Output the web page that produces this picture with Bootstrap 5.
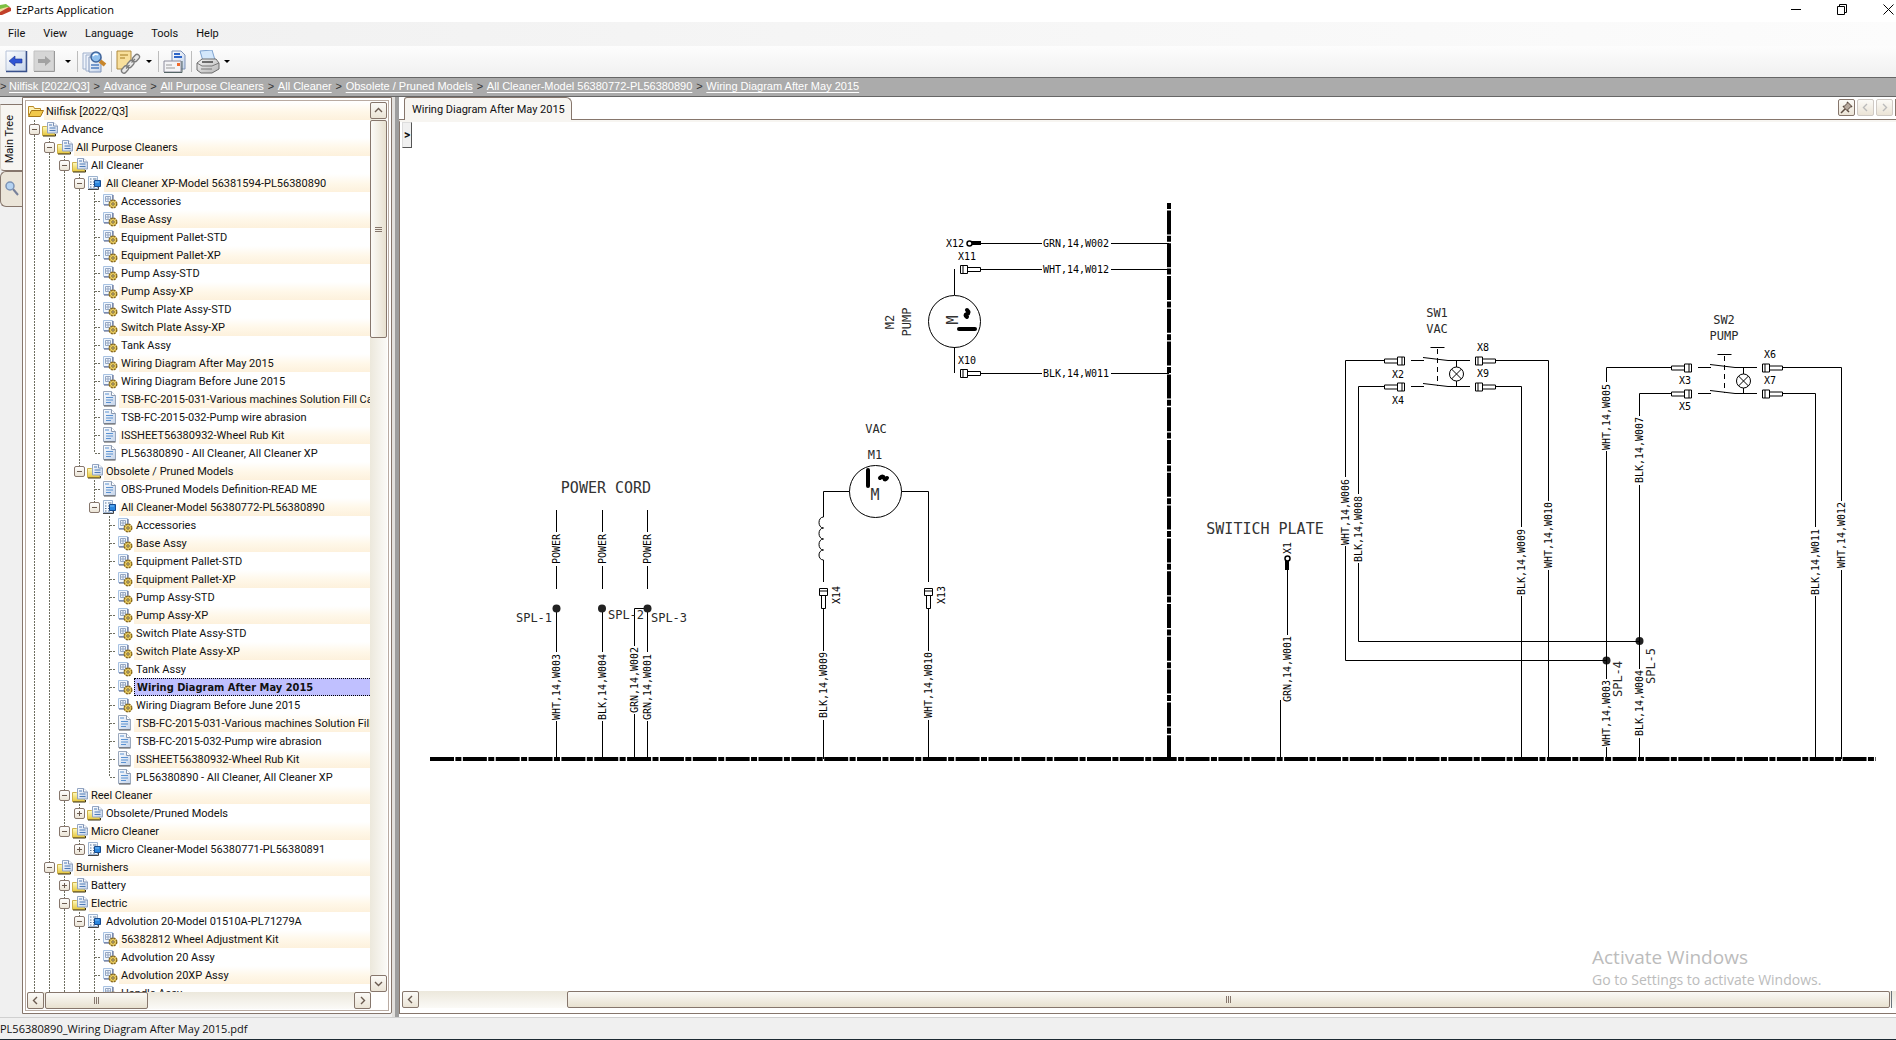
<!DOCTYPE html>
<html lang="en">
<head>
<meta charset="utf-8">
<meta name="viewport" content="width=device-width, initial-scale=1">
<title>EzParts Application</title>
<link href="https://cdn.jsdelivr.net/npm/bootstrap@5.3.0/dist/css/bootstrap.min.css" rel="stylesheet">
<style>
:root{--edge:#86766c;--soft:#b9aba2;--cream:#f7f5f1}
body{font:11px/18px Roboto,"Liberation Sans",sans-serif;color:#111;background:#f0f0f0}
button{font:inherit;padding:0;color:inherit}
svg{display:block;flex:none}
.titlebar{height:22px;background:#fff;font:11px/20px "Open Sans",sans-serif;color:#000}
.titlebar .winbtns{gap:35px;padding-right:2px}
.titlebar .plainbtn{width:11px;height:18px}
.plainbtn{border:0;background:none;display:flex;align-items:center;justify-content:center}
.menus{height:24px;background:linear-gradient(90deg,#f0f0f0,#fcfcfc);gap:18px;padding-left:8px}
.menus button{border:0;background:none;line-height:24px}
.tools{height:31px;background:linear-gradient(#fdfdfd,#f0f0f0);padding-left:5px}
.tools .sep{width:1px;height:21px;background:#bdbdbd;margin:0 4px}
.tools .dropper{margin:0 2px 0 9px}
.tools .dropper.tight{margin-left:5px}
.crumbs{height:20px;background:#ababab;border-top:1px solid #666;border-bottom:1px solid #666;font:11px/17px "Liberation Sans",sans-serif}
.crumbs a{color:#fff;text-decoration:underline;text-underline-offset:2px}
.crumbs span{width:14px;text-align:center;color:#333}
.crumbs span:first-child{width:9px;text-align:left}
.sidetabs{width:22px;background:#f0f0f0;padding-top:7px}
.sidetab{border:1px solid var(--edge);border-right:0;border-radius:6px 0 0 6px;background:#ebe5d9;width:22px;height:36px}
.sidetab.on{height:67px;background:var(--cream);border-left-color:#d8d2ca;border-radius:0 0 0 4px;padding:4px 4px 0 0}
.sidetab.on span{writing-mode:vertical-rl;transform:rotate(180deg);line-height:18px}
.treebox{width:370px;border:1px solid var(--edge);padding:2px;background:#fff;margin-bottom:3px;border-radius:0 0 2px 0}
.treein{border:1px solid var(--soft);padding:1px}
.treerow{height:18px;white-space:nowrap}
.twig{width:15px;height:18px;flex:none;position:relative}
.twig.v::before{content:"";position:absolute;left:7px;top:0;bottom:0;width:1px;background:repeating-linear-gradient(#6e6e60 0 2px,transparent 2px 3px)}
.twig.end::before{bottom:9px}
.twig.h::after{content:"";position:absolute;left:8px;right:1px;top:9px;height:1px;background:repeating-linear-gradient(90deg,#6e6e60 0 2px,transparent 2px 3px)}
.knob{position:absolute;left:2px;top:4px;width:11px;height:11px;border:1px solid var(--edge);border-radius:2px;background:linear-gradient(#fff,#ebe4d6);z-index:1}
.knob::before{content:"";position:absolute;left:2px;right:2px;top:4px;height:1px;background:#6b5b50}
.knob.plus::after{content:"";position:absolute;top:2px;bottom:2px;left:4px;width:1px;background:#6b5b50}
.treerow svg{width:17px;height:18px}
.nodetext{flex:1 0 0;min-width:0;padding:0 0 0 2px;border:0;background:none;text-align:left;white-space:nowrap;overflow:hidden;line-height:17px}
.treerow:nth-child(odd) .nodetext{background:linear-gradient(#fff,#fff8ea 50%,#fdf1dc)}
.treerow .nodetext.picked{background:#c0c0ff;border:1px dotted #000;border-right:0;font:bold 11px/15px "DejaVu Sans Condensed","DejaVu Sans",sans-serif}
.sbtn{width:17px;height:17px;border:1px solid var(--edge);border-radius:2px;background:linear-gradient(#fbfaf7,#ebe4d6);color:#6b5b50;display:flex;align-items:center;justify-content:center;flex:none}
.sbtn.off{border-color:#cfcac5;color:#bbb}
.trackv{width:17px;background:linear-gradient(90deg,#ece8dc,#fbfaf7);flex:none}
.trackh{height:17px;background:linear-gradient(#ece8dc,#fbfaf7)}
.thumb{border:1px solid var(--edge);border-radius:2px;display:flex;align-items:center;justify-content:center}
.trackv .thumb{height:218px;margin:1px 0;background:linear-gradient(90deg,#fbfaf7,#e8e1d0)}
.trackh .thumb{height:17px;background:linear-gradient(#fbfaf7,#e8e1d0)}
.trackh .short{width:103px;margin-left:1px}
.gripv{width:7px;height:5px;background:repeating-linear-gradient(#86766c 0 1px,transparent 1px 2px)}
.griph{width:5px;height:7px;background:repeating-linear-gradient(90deg,#86766c 0 1px,transparent 1px 2px)}
.splitter{width:7px;border-left:3px solid #e2e0dd;background:#9d9d9d}
.viewer{background:#fff;min-width:0}
.tabstrip{height:23px;border-bottom:1px solid var(--edge);padding-left:5px}
.doctab{height:23px;border:1px solid var(--edge);border-bottom:0;border-radius:3px 6px 0 0;background:var(--cream);padding:0 6px 0 7px;line-height:21px;margin-bottom:-1px}
.tabbtns{gap:2px;margin-top:2px}
.nexttab{width:1px;height:17px;background:var(--edge)}
.page{border-left:1px solid var(--edge);border-bottom:1px solid var(--edge);border-top:2px solid var(--cream);min-height:0;padding:0 0 5px 2px;margin-bottom:3px}
.canvas{position:relative;min-height:0}
.flyout{position:absolute;left:0;top:0;width:10px;height:26px;border:1px solid #ddd;border-right-color:#555;border-bottom-color:#555;background:#f0f0f0;font-size:12px;font-weight:bold}
.mark-os{position:absolute;right:68px;bottom:0;color:#bcbcbc;font-family:"Open Sans",sans-serif;width:236px;white-space:nowrap}
.mark-os p{margin:0;font-size:19px;line-height:24px}
.mark-os p+p{font-size:14px;line-height:22px}
.longthumb{margin-left:148px;margin-right:1px}
.statusline{height:23px;border-top:1px solid #d0d0d0;border-bottom:1px solid #1d2a33;font:11px/22px "Open Sans",sans-serif}
.wires{fill:none;stroke:#000;stroke-width:1}
.wires text,.cad{fill:#000;stroke:none;font:10px "DejaVu Sans Mono",monospace;text-anchor:middle}
.wires .mid{font-size:12px;fill:#2a2a2a}
.wires .big{font-size:15px;fill:#333}
</style>
<script src="https://cdn.jsdelivr.net/npm/bootstrap@5.3.0/dist/js/bootstrap.bundle.min.js"></script>
</head>
<body class="vh-100 overflow-hidden d-flex flex-column">

<svg width="0" height="0" class="position-absolute" aria-hidden="true">
<defs>
<linearGradient id="gy" x1="0" y1="0" x2="0" y2="1"><stop offset="0" stop-color="#fffcc0"/><stop offset="1" stop-color="#e6c63c"/></linearGradient>
<linearGradient id="gb" x1="0" y1="0" x2="1" y2="1"><stop offset="0" stop-color="#fff"/><stop offset="1" stop-color="#c3d3ea"/></linearGradient>
<linearGradient id="gg" x1="0" y1="0" x2="1" y2="1"><stop offset="0" stop-color="#f4f4f4"/><stop offset="1" stop-color="#b5b5b5"/></linearGradient>
<symbol id="i-root" viewBox="0 0 17 18"><path d="M1.500 13.500v-9h5l1 2h6v2" fill="#fff3b8" stroke="#b98a26"/><path d="M1.500 14.500l3-6h12l-3 6z" fill="#f2c84b" stroke="#a87718"/></symbol>
<symbol id="i-folder" viewBox="0 0 17 18"><path d="M.5 6.500h4l1 1h7v8H.5z" fill="url(#gy)" stroke="#cdb04a"/><path d="M1 16h12.500v-2" fill="none" stroke="#3f340e"/><path d="M5.500 2.500h6l4 3.500v7h-10z" fill="url(#gb)" stroke="#93a5c2"/><path d="M11.500 2.500V6h4" fill="#fff" stroke="#7f93b5"/><path d="M7 5h3M7.500 8h6M7.500 10.500h6" stroke="#4f7cb8"/></symbol>
<symbol id="i-model" viewBox="0 0 17 18"><path d="M1.500 2.500h9v12h-9z" fill="#f6faff" stroke="#9db3cf"/><path d="M1 15.500h10.500V13" fill="none" stroke="#444"/><path d="M3 5h1.500M3 8h1.500M3 10.500h1.500M3 13h1.500M6 5h3.500M6 8h1M6 10.500h1M6 13h2" stroke="#5b7494"/><path d="M7.500 6.500h6v6h-6z" fill="#2a86de" stroke="#154a8e"/><path d="M8 8h4" stroke="#7fc0f8"/></symbol>
<symbol id="i-part" viewBox="0 0 17 18"><path d="M1.500 2.500h9v10h-9z" fill="#f1f7fe" stroke="#a8c2e2"/><path d="M11 3v8M2 13h5" stroke="#4a5680"/><path d="M3.500 4.500h5v5h-5zM6 4.500v5M3.500 7h5" fill="none" stroke="#95a6c2"/><circle cx="11" cy="12" r="3.500" fill="#d9b234" stroke="#8a6a18" stroke-width="2" stroke-dasharray="2 .75"/><circle cx="11" cy="12" r="3" fill="#ebcf66"/><circle cx="11" cy="12" r="1.200" fill="#fff" stroke="#6c5410"/></symbol>
<symbol id="i-doc" viewBox="0 0 17 18"><path d="M1.500 1.500h8l4 4v10h-12z" fill="url(#gb)" stroke="#9aa8bd"/><path d="M2 16h11.500" stroke="#555"/><path d="M9.500 1.500v4h4" fill="#fff" stroke="#8a99b0"/><path d="M3 4h4M4 7.500h7M4 10h7M4 12.500h5" stroke="#5a92d2"/></symbol>
<symbol id="c-left" viewBox="0 0 9 9"><path d="M6 1L2.500 4.500L6 8" fill="none" stroke="currentColor" stroke-width="1.400"/></symbol>
<symbol id="c-right" viewBox="0 0 9 9"><path d="M3 1l3.500 3.500L3 8" fill="none" stroke="currentColor" stroke-width="1.400"/></symbol>
<symbol id="c-up" viewBox="0 0 9 9"><path d="M1 6l3.500-3.500L8 6" fill="none" stroke="currentColor" stroke-width="1.400"/></symbol>
<symbol id="c-down" viewBox="0 0 9 9"><path d="M1 3l3.500 3.500L8 3" fill="none" stroke="currentColor" stroke-width="1.400"/></symbol>
<symbol id="c-drop" viewBox="0 0 6 4"><path d="M0 0h6L3 3z" fill="#000"/></symbol>
</defs>
</svg>

<header>
  <div class="titlebar d-flex align-items-start">
    <svg width="12" height="18" viewBox="0 0 12 18"><path d="M0 5l6-1 4 3-10 3z" fill="#7dc043"/><path d="M0 9l7-2 3 1-8 4H0z" fill="#f3d9a0"/><path d="M0 12l9-5 2 1v3l-9 4H0z" fill="#c2402a"/></svg>
    <span class="ms-1 flex-grow-1">EzParts Application</span>
    <div class="winbtns d-flex">
      <button class="plainbtn" aria-label="Minimize"><svg width="11" height="11"><path d="M0 5.500h10" stroke="#000"/></svg></button>
      <button class="plainbtn" aria-label="Restore"><svg width="11" height="11"><path d="M.5 2.500h7v8h-7zM2.500 2.500v-2h7v8h-2" fill="none" stroke="#000"/></svg></button>
      <button class="plainbtn" aria-label="Close"><svg width="11" height="11"><path d="M.5.500l10 10M10.500.500l-10 10" stroke="#000"/></svg></button>
    </div>
  </div>
  <nav class="menus d-flex" aria-label="Menu"><button>File</button><button>View</button><button>Language</button><button>Tools</button><button>Help</button></nav>
  <div class="tools d-flex align-items-center">
    <button class="plainbtn" aria-label="Back"><svg width="23" height="23" viewBox="0 0 23 23"><path d="M1 1h20v20H1z" fill="url(#gb)" stroke="#b6c2d8"/><path d="M21.500 1v20.500H1" fill="none" stroke="#39518c" stroke-width="1.500"/><path d="M4 11l6-5v3h7v4h-7v3z" fill="#2f55d4" stroke="#1c338e" stroke-width=".6"/></svg></button>
    <button class="plainbtn ms-1" aria-label="Forward"><svg width="24" height="23" viewBox="0 0 24 23"><path d="M2 1h20v20H2z" fill="#d6d6d6" stroke="#c2c2c2"/><path d="M22.500 1v20.500H2" fill="none" stroke="#999"/><path d="M19 11l-6-5v3H6v4h7v3z" fill="#a2a2a2"/></svg></button>
    <button class="plainbtn dropper" aria-label="History"><svg width="6" height="4"><use href="#c-drop"/></svg></button>
    <i class="sep"></i>
    <button class="plainbtn" aria-label="Search"><svg width="25" height="24" viewBox="0 0 25 24"><path d="M1 3h11v16H1z" fill="#eef3fb" stroke="#9fb0cc"/><path d="M4 5h11v16H4z" fill="#eef3fb" stroke="#9fb0cc"/><path d="M7 7h12v15H7z" fill="url(#gb)" stroke="#7f93b8"/><path d="M9 15h8M9 18h8" stroke="#4f7fc0" stroke-width="1.500"/><path d="M18 11l5 4" stroke="#c8862b" stroke-width="4"/><circle cx="14" cy="7" r="5" fill="#8fc0ee" stroke="#41669c" stroke-width="1.500"/><path d="M11 6q2-3 5-1" fill="none" stroke="#fff" stroke-width="1.500"/></svg></button>
    <i class="sep"></i>
    <button class="plainbtn" aria-label="Links"><svg width="25" height="24" viewBox="0 0 25 24"><path d="M1 1h14v13l-5 5H1z" fill="#f8df9c" stroke="#b08a3c"/><path d="M4 5h8M4 8h5" stroke="#a47a20"/><g fill="none" stroke="#7c7c7c" stroke-width="1.300"><rect x="-2.500" y="-4" width="5" height="8" rx="2.500" fill="#e8e8e8" transform="translate(9 19.500) rotate(42)"/><rect x="-2.500" y="-4" width="5" height="8" rx="2.500" fill="#e8e8e8" transform="translate(14.500 14) rotate(42)"/><rect x="-2.500" y="-4" width="5" height="8" rx="2.500" fill="#e8e8e8" transform="translate(20 8) rotate(42)"/><path d="M10 18.500l3.500-3.500M15.500 12.500l3.500-3.500"/></g></svg></button>
    <button class="plainbtn dropper tight" aria-label="More links"><svg width="6" height="4"><use href="#c-drop"/></svg></button>
    <i class="sep"></i>
    <button class="plainbtn" aria-label="Send"><svg width="24" height="24" viewBox="0 0 24 24"><path d="M9 1h9l4 4v14H9z" fill="url(#gb)" stroke="#7f93b8"/><path d="M11 4h6M11 7h8" stroke="#2f66c8" stroke-width="2"/><path d="M1 11h17v11H1z" fill="#f4f4f6" stroke="#8c8c9c"/><path d="M3 15h6M3 18h9" stroke="#999"/><path d="M14 13h3v3h-3z" fill="#f06a2a"/><path d="M1 22.500h18V11" fill="none" stroke="#566"/></svg></button>
    <i class="sep"></i>
    <button class="plainbtn" aria-label="Print"><svg width="24" height="24" viewBox="0 0 24 24"><path d="M4 1l12-1 3 10-12 1z" fill="#d3e7fb" stroke="#7fa3cf"/><path d="M1 13l5-4h14l3 4v6l-7 4H5l-4-3z" fill="url(#gg)" stroke="#6c6c6c"/><path d="M1 13l5 3h10l7-3M5 19h11" fill="none" stroke="#777"/><path d="M6 12h11" stroke="#444" stroke-width="1.500"/></svg></button>
    <button class="plainbtn ms-1" aria-label="Print options"><svg width="6" height="4"><use href="#c-drop"/></svg></button>
  </div>
  <nav class="crumbs d-flex" aria-label="Breadcrumb"><span>&gt;</span><a href="#">Nilfisk [2022/Q3]</a><span>&gt;</span><a href="#">Advance</a><span>&gt;</span><a href="#">All Purpose Cleaners</a><span>&gt;</span><a href="#">All Cleaner</a><span>&gt;</span><a href="#">Obsolete / Pruned Models</a><span>&gt;</span><a href="#">All Cleaner-Model 56380772-PL56380890</a><span>&gt;</span><a href="#">Wiring Diagram After May 2015</a></nav>
</header>

<main class="d-flex flex-grow-1 overflow-hidden">
  <div class="sidetabs flex-shrink-0 d-flex flex-column">
    <button class="sidetab on d-flex align-items-center justify-content-center"><span>Main Tree</span></button>
    <button class="sidetab d-flex align-items-center ps-1" aria-label="Search"><svg width="14" height="16" viewBox="0 0 14 16"><path d="M8 8l5 6" stroke="#77809a" stroke-width="2"/><circle cx="5" cy="5" r="4" fill="#b5d3f2" stroke="#7c93b5" stroke-width="1.500"/></svg></button>
  </div>
  <aside class="treebox flex-shrink-0 d-flex">
    <div class="treein d-flex flex-column flex-grow-1 overflow-hidden">
      <div class="d-flex flex-grow-1 overflow-hidden">
        <div id="tree" class="flex-grow-1 overflow-hidden" role="tree"></div>
        <div class="trackv d-flex flex-column">
          <button class="sbtn" aria-label="Scroll up"><svg width="9" height="9"><use href="#c-up"/></svg></button>
          <div class="thumb"><i class="gripv"></i></div>
          <button class="sbtn mt-auto" aria-label="Scroll down"><svg width="9" height="9"><use href="#c-down"/></svg></button>
        </div>
      </div>
      <div class="d-flex pe-3"><div class="trackh d-flex flex-grow-1">
        <button class="sbtn" aria-label="Scroll left"><svg width="9" height="9"><use href="#c-left"/></svg></button>
        <div class="thumb short"><i class="griph"></i></div>
        <button class="sbtn ms-auto" aria-label="Scroll right"><svg width="9" height="9"><use href="#c-right"/></svg></button>
      </div></div>
    </div>
  </aside>
  <div class="splitter flex-shrink-0"></div>
  <section class="viewer flex-grow-1 d-flex flex-column">
    <div class="tabstrip d-flex flex-shrink-0">
      <button class="doctab">Wiring Diagram After May 2015</button>
      <div class="tabbtns d-flex ms-auto">
        <button class="sbtn" aria-label="Pin"><svg width="13" height="13" viewBox="0 0 13 13"><path d="M1 12l4-4M3 5l6 6M7 1l5 5M4 6l4-4M7 9l4-4" stroke="#5b4b40" stroke-width="1.500"/><path d="M4 6l4-4 3 3-4 4z" fill="#b5a89c"/></svg></button>
        <button class="sbtn off" aria-label="Previous tab"><svg width="9" height="9"><use href="#c-left"/></svg></button>
        <button class="sbtn off" aria-label="Next tab"><svg width="9" height="9"><use href="#c-right"/></svg></button>
        <i class="nexttab"></i>
      </div>
    </div>
    <div class="page flex-grow-1 d-flex flex-column">
      <div class="canvas flex-grow-1 overflow-hidden">
        <svg class="w-100 h-100" role="img" aria-label="Wiring diagram">
          <defs>
            <g id="plug"><path d="M.5-4h7v8h-7zM3-4v8M7.500-2h13v4h-13z"/></g>
            <g id="switch"><path d="M-6.500-26.500h14"/><path d="M.5-25v37" stroke-dasharray="5 4"/><path d="M-26-13.500h13M-14-16.500l25 3H33M-26 12.500h13M-14 9.500l25 3H33M19.500-13v6M19.500 7v6"/><circle cx="19.500" cy="0" r="7"/><path d="M14.500-5l10 10M24.500-5l-10 10"/><use href="#plug" x="38" y="-13"/><use href="#plug" x="38" y="13"/><use href="#plug" transform="translate(-32 -13) scale(-1 1)"/><use href="#plug" transform="translate(-32 13) scale(-1 1)"/></g>
          </defs>
          <g class="wires" transform="translate(-402 -122)">
            <path d="M430 759H1876" stroke-width="4" stroke-dasharray="24 1.400 6 1.450"/>
            <path d="M1169 203V759" stroke-width="4" stroke-dasharray="6 1.400 24 1.400"/>
            <!-- power cord -->
            <path d="M556.500 510v22M556.500 566v23M556.500 608v44M556.500 721v38M602.500 510v22M602.500 566v23M602.500 608v44M602.500 721v38M647.500 510v22M647.500 566v23M647.500 608v44M647.500 721v38M647 608.500H634.500V646M634.500 714v45"/>
            <g fill="#222" stroke="none"><circle cx="556.500" cy="608.500" r="4"/><circle cx="602" cy="608.500" r="4"/><circle cx="647.500" cy="608.500" r="4"/><circle cx="1606.500" cy="660.500" r="4"/><circle cx="1639.500" cy="641" r="4"/></g>
            <text class="cad big" x="606" y="493">POWER CORD</text>
            <text transform="translate(560 549) rotate(-90)">POWER</text><text transform="translate(606 549) rotate(-90)">POWER</text><text transform="translate(651 549) rotate(-90)">POWER</text>
            <text class="cad mid" x="534" y="622">SPL-1</text><text class="cad mid" x="626" y="619">SPL-2</text><text class="cad mid" x="669" y="622">SPL-3</text>
            <text transform="translate(560 687) rotate(-90)">WHT,14,W003</text><text transform="translate(606 687) rotate(-90)">BLK,14,W004</text><text transform="translate(638 680) rotate(-90)">GRN,14,W002</text><text transform="translate(651 687) rotate(-90)">GRN,14,W001</text>
            <!-- vac motor -->
            <text class="cad mid" x="876" y="433">VAC</text><text class="cad mid" x="875" y="459">M1</text>
            <circle cx="875.500" cy="491.500" r="26"/>
            <path d="M849.500 491.500H823.500V517c-6 0-6 11 0 11c-6 0-6 11 0 11c-6 0-6 11 0 11c-6 0-6 10 0 10V582M901.500 491.500H928.500V582M823.500 608V651M823.500 720V759M928.500 608V651M928.500 720V759"/>
            <path d="M868 470v16" stroke-width="4" stroke-linecap="round"/><path d="M880 478q3-3 4 0t3 0" stroke-width="4" stroke-linecap="round"/>
            <text class="cad big" x="875" y="500">M</text>
            <use href="#plug" transform="translate(823.500 588) rotate(90)"/><use href="#plug" transform="translate(928.500 588) rotate(90)"/>
            <text transform="translate(840 595) rotate(-90)">X14</text><text transform="translate(945 595) rotate(-90)">X13</text>
            <text transform="translate(827 685) rotate(-90)">BLK,14,W009</text><text transform="translate(932 685) rotate(-90)">WHT,14,W010</text>
            <!-- pump motor -->
            <circle cx="954.500" cy="321.500" r="26"/>
            <path d="M954.500 269V295M954.500 347V373M981 243.500H1042M1111 243.500H1169M981 269.500H1042M1111 269.500H1169M981 373.500H1042M1111 373.500H1169"/>
            <path d="M959 329h16" stroke-width="4" stroke-linecap="round"/><path d="M967 310q3 3 0 4t0 3" stroke-width="4" stroke-linecap="round"/>
            <text class="cad big" transform="translate(958 320) rotate(-90)">M</text>
            <text class="cad mid" transform="translate(894 322) rotate(-90)">M2</text><text class="cad mid" transform="translate(911 322) rotate(-90)">PUMP</text>
            <circle cx="969.500" cy="243.500" r="2.500" stroke-width="1.500"/><path d="M972 243h9" stroke-width="4"/>
            <use href="#plug" x="960" y="269.500"/><use href="#plug" x="960" y="373.500"/>
            <text x="955" y="247">X12</text><text x="967" y="260">X11</text><text x="967" y="364">X10</text>
            <text x="1076" y="247">GRN,14,W002</text><text x="1076" y="273">WHT,14,W012</text><text x="1076" y="377">BLK,14,W011</text>
            <!-- switch plate -->
            <text class="cad big" x="1265" y="534">SWITICH PLATE</text>
            <text transform="translate(1291 548) rotate(-90)">X1</text>
            <circle cx="1287.500" cy="558.500" r="2.500" stroke-width="1.500"/><path d="M1287 561v9" stroke-width="4"/>
            <path d="M1287.500 570V635M1280.500 700V759"/><text transform="translate(1291 669) rotate(-90)">GRN,14,W001</text>
            <!-- vac switch -->
            <text class="cad mid" x="1437" y="317">SW1</text><text class="cad mid" x="1437" y="333">VAC</text>
            <use href="#switch" x="1437" y="374"/>
            <text x="1398" y="378">X2</text><text x="1398" y="404">X4</text><text x="1483" y="351">X8</text><text x="1483" y="377">X9</text>
            <path d="M1384 360.500H1345.500V477M1345.500 546V660.500H1606M1384 386.500H1358.500V494M1358.500 563V641.500H1639M1496 386.500H1521.500V527M1521.500 596V759M1496 360.500H1548.500V501M1548.500 570V759"/>
            <text transform="translate(1349 512) rotate(-90)">WHT,14,W006</text><text transform="translate(1362 529) rotate(-90)">BLK,14,W008</text><text transform="translate(1525 562) rotate(-90)">BLK,14,W009</text><text transform="translate(1552 535) rotate(-90)">WHT,14,W010</text>
            <!-- pump switch -->
            <text class="cad mid" x="1724" y="324">SW2</text><text class="cad mid" x="1724" y="340">PUMP</text>
            <use href="#switch" x="1724" y="381"/>
            <text x="1685" y="384">X3</text><text x="1685" y="410">X5</text><text x="1770" y="358">X6</text><text x="1770" y="384">X7</text>
            <path d="M1671 367.500H1606.500V382M1606.500 451V679M1606.500 747V759M1671 393.500H1639.500V416M1639.500 485V669M1639.500 738V759M1783 393.500H1815.500V527M1815.500 596V759M1783 367.500H1841.500V501M1841.500 570V759"/>
            <text transform="translate(1610 417) rotate(-90)">WHT,14,W005</text><text transform="translate(1643 450) rotate(-90)">BLK,14,W007</text><text transform="translate(1819 562) rotate(-90)">BLK,14,W011</text><text transform="translate(1845 535) rotate(-90)">WHT,14,W012</text>
            <text transform="translate(1610 713) rotate(-90)">WHT,14,W003</text><text transform="translate(1643 703) rotate(-90)">BLK,14,W004</text>
            <text class="cad mid" transform="translate(1622 679) rotate(-90)">SPL-4</text><text class="cad mid" transform="translate(1655 666) rotate(-90)">SPL-5</text>
          </g>
        </svg>
        <button class="flyout plainbtn" aria-label="Expand">&gt;</button>
        <div class="mark-os"><p>Activate Windows</p><p>Go to Settings to activate Windows.</p></div>
      </div>
      <div class="trackh d-flex flex-shrink-0">
        <button class="sbtn" aria-label="Scroll left"><svg width="9" height="9"><use href="#c-left"/></svg></button>
        <div class="thumb longthumb flex-grow-1"><i class="griph"></i></div>
        <div class="border-start border-secondary ps-1"></div>
      </div>
    </div>
  </section>
</main>
<footer class="statusline flex-shrink-0">PL56380890_Wiring Diagram After May 2015.pdf</footer>

<script>
// level | icon | state (-, + or blank) | label
const parts = ["Accessories","Base Assy","Equipment Pallet-STD","Equipment Pallet-XP","Pump Assy-STD","Pump Assy-XP","Switch Plate Assy-STD","Switch Plate Assy-XP","Tank Assy","Wiring Diagram After May 2015","Wiring Diagram Before June 2015"];
const docs = ["TSB-FC-2015-031-Various machines Solution Fill Cap","TSB-FC-2015-032-Pump wire abrasion","ISSHEET56380932-Wheel Rub Kit","PL56380890 - All Cleaner, All Cleaner XP"];
const leaves = n => [...parts.map(t => [n,"part","",t]), ...docs.map(t => [n,"doc","",t])];
const nodes = [
  [-1,"root","","Nilfisk [2022/Q3]"],
  [0,"folder","-","Advance"],
  [1,"folder","-","All Purpose Cleaners"],
  [2,"folder","-","All Cleaner"],
  [3,"model","-","All Cleaner XP-Model 56381594-PL56380890"], ...leaves(4),
  [3,"folder","-","Obsolete / Pruned Models"],
  [4,"doc","","OBS-Pruned Models Definition-READ ME"],
  [4,"model","-","All Cleaner-Model 56380772-PL56380890"], ...leaves(5),
  [2,"folder","-","Reel Cleaner"],
  [3,"folder","+","Obsolete/Pruned Models"],
  [2,"folder","-","Micro Cleaner"],
  [3,"model","+","Micro Cleaner-Model 56380771-PL56380891"],
  [1,"folder","-","Burnishers"],
  [2,"folder","+","Battery"],
  [2,"folder","-","Electric"],
  [3,"model","-","Advolution 20-Model 01510A-PL71279A"],
  [4,"part","","56382812 Wheel Adjustment Kit"],
  [4,"part","","Advolution 20 Assy"],
  [4,"part","","Advolution 20XP Assy"],
  [4,"part","","Handle Assy"]
];
const goesOn = (i, k) => {
  for (let j = i + 1; j < nodes.length; j++) {
    if (nodes[j][0] === k) return true;
    if (nodes[j][0] < k) return false;
  }
  return true;
};
document.getElementById("tree").innerHTML = nodes.map(([n, icon, state, label], i) => {
  let twigs = "";
  for (let k = 0; k < n; k++) twigs += `<span class="twig ${goesOn(i, k) ? "v" : ""}"></span>`;
  if (n >= 0) twigs += `<span class="twig v h ${goesOn(i, n) ? "" : "end"}">${state ? `<button class="knob ${state === "+" ? "plus" : ""}" aria-label="Toggle ${label}"></button>` : ""}</span>`;
  const picked = n === 5 && label === "Wiring Diagram After May 2015" ? " picked" : "";
  return `<div class="treerow d-flex" role="treeitem">${twigs}<svg><use href="#i-${icon}"/></svg><button class="nodetext${picked}">${label}</button></div>`;
}).join("");
</script>
</body>
</html>
